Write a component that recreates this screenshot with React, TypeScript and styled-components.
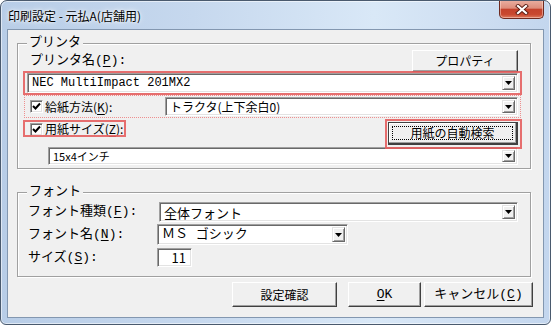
import React from "react"
import styled, { createGlobalStyle } from "styled-components"

const GOTHIC = `"Liberation Mono", "Noto Sans CJK JP", monospace`
const UI = `"Noto Sans CJK JP", "Noto Sans", sans-serif`

const GlobalStyle = createGlobalStyle`
  html, body { margin: 0; padding: 0; background: #fff; }
  body { font-family: ${UI}; }
  u { text-decoration-thickness: 1px; text-underline-offset: 2px; }
`

const Window = styled.div`
  width: 551px;
  height: 325px;
  box-sizing: border-box;
  border: 1px solid #4a5a6e;
  border-radius: 7px 7px 6px 6px;
  background: linear-gradient(90deg, #b8cde7 0%, #c6d8ee 35%, #d9e8f7 68%, #cfdff2 85%, #c3d6ee 100%);
  box-shadow: inset 0 0 0 1px rgba(255, 255, 255, 0.55);
  display: flex;
  flex-direction: column;
  overflow: hidden;
`

const TitleBar = styled.div`
  height: 28px;
  display: flex;
  align-items: flex-start;
  padding: 0 6px 0 7px;
`

const Title = styled.div`
  flex: 1;
  margin-top: 8px;
  font: 12px/14px ${UI};
  color: #000;
  text-shadow: 0 0 6px #fff, 0 0 3px #fff;
`

const CloseButton = styled.div`
  width: 45px;
  height: 19px;
  margin-top: -1px;
  box-sizing: border-box;
  border: 1px solid #6e2a20;
  border-top: none;
  border-radius: 0 0 5px 5px;
  background: linear-gradient(#eab0a2 0%, #dd8d7b 45%, #c4422c 52%, #c9482f 80%, #dc7a5e 100%);
  box-shadow: inset 0 0 0 1px rgba(255, 220, 210, 0.5);
  display: flex;
  align-items: center;
  justify-content: center;
`

const Client = styled.div`
  flex: 1;
  margin: 0 6px 6px 6px;
  border: 1px solid #8397b0;
  background: #f0f0f0;
  padding: 13px 10px 0 9px;
  display: flex;
  flex-direction: column;
`

const Group = styled.div<{ $h: number; $mt?: number }>`
  position: relative;
  height: ${p => p.$h}px;
  margin: ${p => p.$mt ?? 0}px 2px 0 0;
  box-sizing: border-box;
  border: 1px solid #a0a0a0;
  box-shadow: inset 1px 1px 0 #fff, 1px 1px 0 #fff;
  display: flex;
  flex-direction: column;
`

const Legend = styled.div`
  position: absolute;
  top: -9px;
  left: 9px;
  padding: 0 2px;
  background: #f0f0f0;
  font: 13px/16px ${GOTHIC};
  color: #000;
`

const Row = styled.div<{ $mt: number; $h: number; $pl: number }>`
  display: flex;
  align-items: center;
  margin-top: ${p => p.$mt}px;
  height: ${p => p.$h}px;
  padding: 0 12px 0 ${p => p.$pl}px;
`

const Label = styled.span<{ $mono?: boolean; $w?: number }>`
  font: ${p => (p.$mono ? `13px/16px ${GOTHIC}` : `12px/16px ${UI}`)};
  color: #000;
  white-space: nowrap;
  width: ${p => (p.$w ? `${p.$w}px` : "auto")};
  flex: none;
`

const Mark = styled.div<{ $t: number; $r: number; $b: number; $l: number; $dotted?: boolean; $grow?: boolean; $mt?: number }>`
  position: relative;
  display: flex;
  align-items: center;
  flex: ${p => (p.$grow ? "1" : "none")};
  align-self: ${p => (p.$mt !== undefined ? "flex-start" : "stretch")};
  margin-top: ${p => p.$mt ?? 0}px;
  &::after {
    content: "";
    position: absolute;
    pointer-events: none;
    top: ${p => -p.$t}px;
    right: ${p => -p.$r}px;
    bottom: ${p => -p.$b}px;
    left: ${p => -p.$l}px;
    border: ${p => (p.$dotted ? "1px dotted #ee8f8f" : "2px solid #e45f5f")};
    opacity: ${p => (p.$dotted ? 1 : 0.9)};
  }
`

const Combo = styled.div<{ $w?: number; $h: number }>`
  box-sizing: border-box;
  width: ${p => (p.$w ? `${p.$w}px` : "auto")};
  flex: ${p => (p.$w ? "none" : "1")};
  margin-left: ${p => (p.$w ? "auto" : "0")};
  height: ${p => p.$h}px;
  background: #fff;
  border-top: 1px solid #a0a0a0;
  border-left: 1px solid #a0a0a0;
  border-bottom: 1px solid #fff;
  border-right: 1px solid #fff;
  box-shadow: inset 1px 1px 0 #696969, inset -1px -1px 0 #e3e3e3;
  display: flex;
  align-items: stretch;
  padding: 2px;
`

const ComboText = styled.div<{ $mono?: boolean; $size?: number; $right?: boolean }>`
  flex: 1;
  display: flex;
  align-items: center;
  justify-content: ${p => (p.$right ? "flex-end" : "flex-start")};
  padding: ${p => (p.$right ? "0 3px 0 0" : "0 0 0 2px")};
  font-family: ${p => (p.$mono ? GOTHIC : UI)};
  font-size: ${p => p.$size ?? 12}px;
  line-height: 13px;
  color: #000;
  white-space: nowrap;
`

const DropButton = styled.div`
  width: 13px;
  box-sizing: border-box;
  background: #f0f0f0;
  border-top: 1px solid #e3e3e3;
  border-left: 1px solid #e3e3e3;
  border-bottom: 1px solid #696969;
  border-right: 1px solid #696969;
  box-shadow: inset 1px 1px 0 #fff, inset -1px -1px 0 #a0a0a0;
  display: flex;
  align-items: center;
  justify-content: center;
`

const Check = styled.div<{ $ml?: number }>`
  width: 13px;
  height: 13px;
  margin-left: ${p => p.$ml ?? 0}px;
  box-sizing: border-box;
  background: #fff;
  border-top: 1px solid #a0a0a0;
  border-left: 1px solid #a0a0a0;
  border-bottom: 1px solid #fff;
  border-right: 1px solid #fff;
  box-shadow: inset 1px 1px 0 #696969, inset -1px -1px 0 #e3e3e3;
  display: flex;
  align-items: center;
  justify-content: center;
  margin-right: 2px;
  flex: none;
`

const Button = styled.div<{ $w: number; $h: number; $mono?: boolean; $default?: boolean; $ml?: number }>`
  width: ${p => p.$w}px;
  height: ${p => p.$h}px;
  margin-left: ${p => (p.$ml === undefined ? "auto" : `${p.$ml}px`)};
  box-sizing: border-box;
  background: #f0f0f0;
  border-top: 1px solid ${p => (p.$default ? "#404040" : "#fff")};
  border-left: 1px solid ${p => (p.$default ? "#404040" : "#fff")};
  border-bottom: ${p => (p.$default ? "2px" : "1px")} solid #404040;
  border-right: ${p => (p.$default ? "2px" : "1px")} solid #404040;
  box-shadow: inset -1px -1px 0 #a0a0a0${p => (p.$default ? ", inset 1px 1px 0 #fff" : "")};
  display: flex;
  align-items: center;
  justify-content: center;
  font: ${p => (p.$mono ? `13px/16px ${GOTHIC}` : `12px/16px ${UI}`)};
  color: #000;
  flex: none;
`

const FocusRing = styled.div`
  flex: 1;
  align-self: stretch;
  margin: 3px;
  border: 1px dotted #000;
  display: flex;
  align-items: center;
  justify-content: center;
`

const ButtonRow = styled.div`
  display: flex;
  justify-content: flex-end;
  margin-top: 5px;
`

const Spacer = styled.span`
  flex: 1;
`

const Arrow = () => (
  <svg width="7" height="4" viewBox="0 0 7 4">
    <polygon points="0,0 7,0 3.5,4" fill="#000" />
  </svg>
)

const Tick = () => (
  <svg width="9" height="9" viewBox="0 0 9 9">
    <polyline points="1,4 3.5,6.5 8,1.5" fill="none" stroke="#000" strokeWidth="2" />
  </svg>
)

const CloseGlyph = () => (
  <svg width="14" height="11" viewBox="0 0 14 11">
    <path d="M3 2 L11 9 M11 2 L3 9" stroke="#5c1e14" strokeWidth="4" strokeLinecap="square" />
    <path d="M3 2 L11 9 M11 2 L3 9" stroke="#fff" strokeWidth="2.2" strokeLinecap="square" />
  </svg>
)

const ComboBox = ({
  text,
  w,
  h,
  mono,
  size,
  arrow = true,
  right,
}: {
  text: string
  w?: number
  h: number
  mono?: boolean
  size?: number
  arrow?: boolean
  right?: boolean
}) => (
  <Combo $w={w} $h={h}>
    <ComboText $mono={mono} $size={size} $right={right}>
      {text}
    </ComboText>
    {arrow && (
      <DropButton>
        <Arrow />
      </DropButton>
    )}
  </Combo>
)

export default function App() {
  return (
    <>
      <GlobalStyle />
      <Window>
        <TitleBar>
          <Title>印刷設定 - 元払A(店舗用)</Title>
          <CloseButton>
            <CloseGlyph />
          </CloseButton>
        </TitleBar>
        <Client>
          <Group $h={126}>
            <Legend>プリンタ</Legend>
            <Row $mt={6} $h={22} $pl={12}>
              <Label $mono>
                プリンタ名(<u>P</u>):
              </Label>
              <Button $w={106} $h={22}>
                プロパティ
              </Button>
            </Row>
            <Row $mt={1} $h={20} $pl={9}>
              <Mark $t={2} $r={4} $b={2} $l={4} $grow>
                <ComboBox text="NEC MultiImpact 201MX2" h={20} mono size={12} />
              </Mark>
            </Row>
            <Row $mt={4} $h={19} $pl={6}>
              <Mark $t={2} $r={3} $b={2} $l={0} $dotted $grow>
                <Check $ml={6}>
                  <Tick />
                </Check>
                <Label>
                  給紙方法(<u>K</u>):
                </Label>
                <ComboBox text="トラクタ(上下余白0)" w={353} h={19} />
              </Mark>
            </Row>
            <Row $mt={6} $h={23} $pl={12}>
              <Mark $t={1} $r={3} $b={0} $l={7} $mt={-1}>
                <Check>
                  <Tick />
                </Check>
                <Label>
                  用紙サイズ(<u>Z</u>):
                </Label>
              </Mark>
              <Spacer />
              <Mark $t={3} $r={4} $b={4} $l={3}>
                <Button $w={130} $h={23} $default $ml={0}>
                  <FocusRing>用紙の自動検索</FocusRing>
                </Button>
              </Mark>
            </Row>
            <Row $mt={2} $h={18} $pl={30}>
              <ComboBox text="15x4インチ" h={18} size={11} />
            </Row>
          </Group>

          <Group $h={85} $mt={23}>
            <Legend>フォント</Legend>
            <Row $mt={9} $h={20} $pl={10}>
              <Label $mono $w={129}>
                フォント種類(<u>F</u>):
              </Label>
              <ComboBox text="全体フォント" w={359} h={20} size={13} />
            </Row>
            <Row $mt={2} $h={21} $pl={10}>
              <Label $mono $w={129}>
                フォント名(<u>N</u>):
              </Label>
              <ComboBox text="ＭＳ ゴシック" w={191} h={21} size={13} mono />
              <Spacer />
            </Row>
            <Row $mt={3} $h={19} $pl={10}>
              <Label $mono $w={129}>
                サイズ(<u>S</u>):
              </Label>
              <ComboBox text="11" w={35} h={19} size={13} arrow={false} right />
              <Spacer />
            </Row>
          </Group>

          <ButtonRow>
            <Button $w={105} $h={25} $ml={0}>
              設定確認
            </Button>
            <Button $w={73} $h={25} $ml={11} $mono>
              <u>O</u>K
            </Button>
            <Button $w={109} $h={25} $ml={3} $mono>
              キャンセル(<u>C</u>)
            </Button>
          </ButtonRow>
        </Client>
      </Window>
    </>
  )
}
